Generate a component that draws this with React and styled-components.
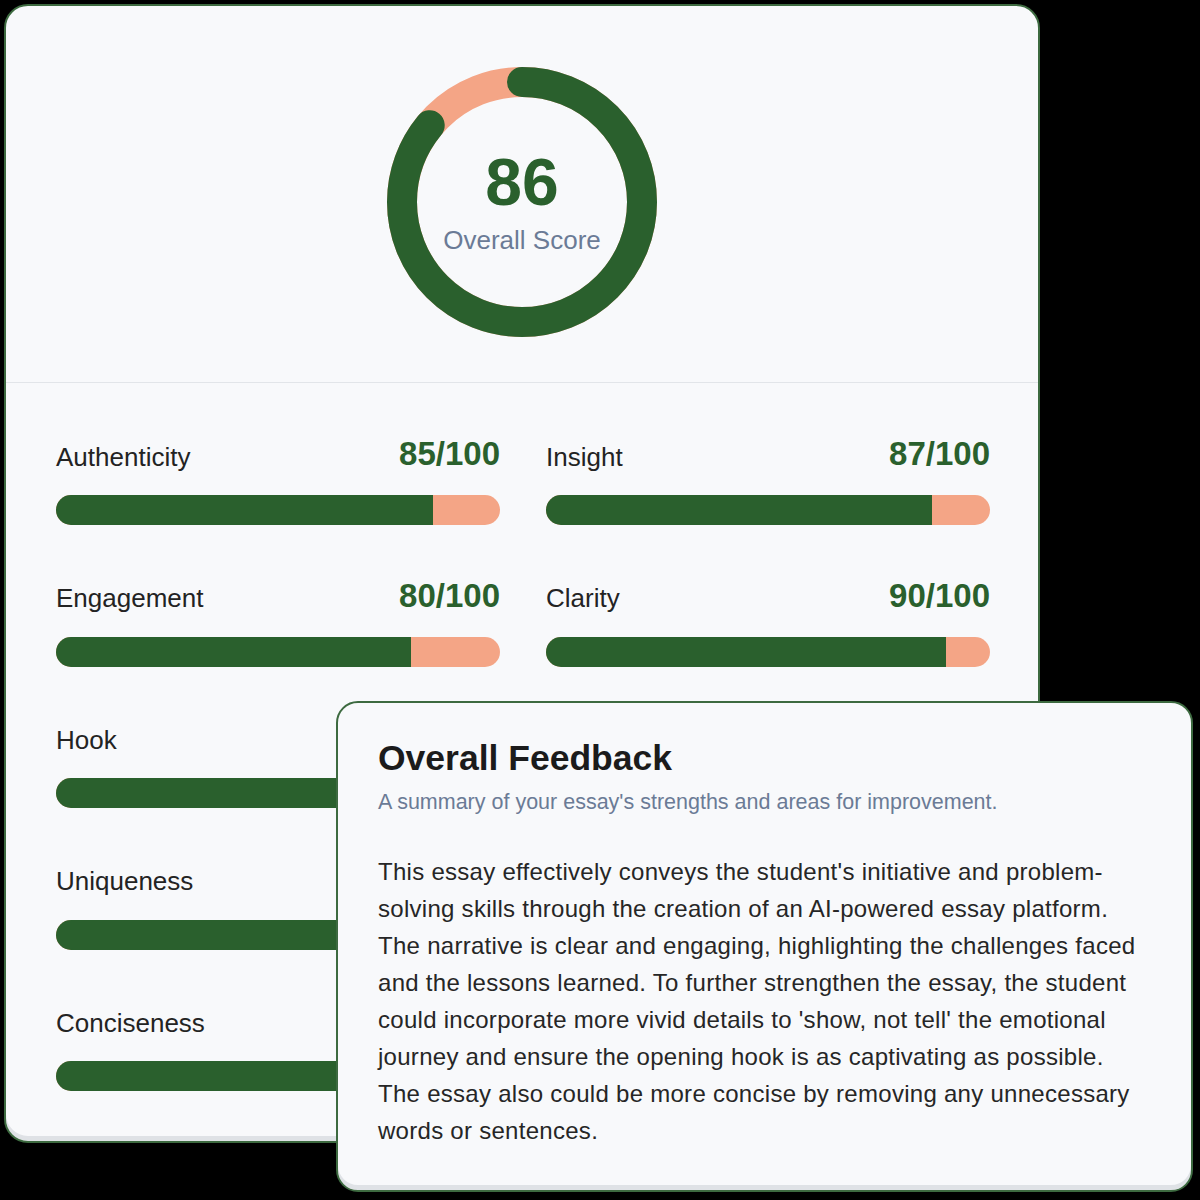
import React from 'react';
import styled, { createGlobalStyle } from 'styled-components';

const GlobalStyle = createGlobalStyle`
  html, body {
    margin: 0;
    padding: 0;
    background: #000;
  }
  * { box-sizing: border-box; }
`;

const GREEN = '#2a602d';
const PEACH = '#f4a586';

// scores behind the feedback card are not visible, so only their bars are drawn
const leftScores = [
  { name: 'Authenticity', value: 85, shown: true },
  { name: 'Engagement', value: 80, shown: true },
  { name: 'Hook', value: 84 },
  { name: 'Uniqueness', value: 86 },
  { name: 'Conciseness', value: 82 },
];

const rightScores = [
  { name: 'Insight', value: 87, shown: true },
  { name: 'Clarity', value: 90, shown: true },
];

function MetricList({ items }) {
  return (
    <Column>
      {items.map(s => (
        <Metric key={s.name}>
          <MetricHead>
            <MetricName>{s.name}</MetricName>
            {s.shown && <MetricScore>{s.value}/100</MetricScore>}
          </MetricHead>
          <Track>
            <Fill style={{ width: s.value + '%' }} />
          </Track>
        </Metric>
      ))}
    </Column>
  );
}

export default function App() {
  return (
    <>
      <GlobalStyle />
      <Page>
        <ScoreCard>
          <RingSection>
            <ScoreRing value={86} />
          </RingSection>
          <Divider />
          <MetricGrid>
            <MetricList items={leftScores} />
            <MetricList items={rightScores} />
          </MetricGrid>
        </ScoreCard>

        <FeedbackCard>
          <FeedbackTitle>Overall Feedback</FeedbackTitle>
          <FeedbackSub>A summary of your essay's strengths and areas for improvement.</FeedbackSub>
          <FeedbackBody>
            This essay effectively conveys the student's initiative and problem-solving skills through the creation of an AI-powered essay platform. The narrative is clear and engaging, highlighting the challenges faced and the lessons learned. To further strengthen the essay, the student could incorporate more vivid details to 'show, not tell' the emotional journey and ensure the opening hook is as captivating as possible. The essay also could be more concise by removing any unnecessary words or sentences.
          </FeedbackBody>
        </FeedbackCard>
      </Page>
    </>
  );
}

function ScoreRing({ value }) {
  const r = 120;
  const c = 2 * Math.PI * r;
  return (
    <RingWrap>
      <svg width="270" height="270" viewBox="0 0 270 270">
        <circle cx="135" cy="135" r={r} fill="none" stroke={PEACH} strokeWidth="30" />
        <circle
          cx="135"
          cy="135"
          r={r}
          fill="none"
          stroke={GREEN}
          strokeWidth="30"
          strokeLinecap="round"
          strokeDasharray={`${(c * value) / 100} ${c}`}
          transform="rotate(-90 135 135)"
        />
      </svg>
      <RingText>
        <BigNum>{value}</BigNum>
        <RingLabel>Overall Score</RingLabel>
      </RingText>
    </RingWrap>
  );
}

const Page = styled.div`
  position: relative;
  width: 1200px;
  height: 1200px;
  background: #000;
  padding: 4px 0 0 4px;
  font-family: "Liberation Sans", Arial, Helvetica, sans-serif;
  overflow: hidden;
`;

const ScoreCard = styled.div`
  width: 1036px;
  height: 1139px;
  background: #f8f9fb;
  border: 2px solid #3d6a40;
  border-radius: 24px;
  box-shadow: inset 0 -5px 0 #dfe2e6;
  overflow: hidden;
`;

const RingSection = styled.div`
  display: flex;
  justify-content: center;
  padding: 61px 0 44px 0;
  height: 376px;
`;

const RingWrap = styled.div`
  position: relative;
  width: 270px;
  height: 270px;
`;

const RingText = styled.div`
  position: absolute;
  inset: 0;
  display: flex;
  flex-direction: column;
  align-items: center;
  justify-content: center;
`;

const BigNum = styled.div`
  font-size: 66px;
  font-weight: 700;
  color: ${GREEN};
  line-height: 66px;
`;

const RingLabel = styled.div`
  font-size: 26px;
  line-height: 30px;
  color: #6b7b96;
  margin-top: 10px;
`;

const Divider = styled.div`
  height: 1px;
  background: #e2e5e9;
`;

const MetricGrid = styled.div`
  display: grid;
  grid-template-columns: 444px 444px;
  column-gap: 46px;
  align-items: start;
  padding: 55px 0 0 50px;
`;

const Column = styled.div`
  display: flex;
  flex-direction: column;
  gap: 54.5px;
`;

const Metric = styled.div`
  display: flex;
  flex-direction: column;
  gap: 21px;
`;

const MetricHead = styled.div`
  display: flex;
  justify-content: space-between;
  align-items: center;
  height: 36px;
`;

const MetricName = styled.span`
  font-size: 26px;
  color: #232323;
  padding-top: 2px;
`;

const MetricScore = styled.span`
  font-size: 33px;
  font-weight: 700;
  color: ${GREEN};
  margin-top: -4px;
`;

const Track = styled.div`
  height: 30px;
  border-radius: 15px;
  background: ${PEACH};
  overflow: hidden;
`;

const Fill = styled.div`
  height: 100%;
  background: ${GREEN};
`;

const FeedbackCard = styled.div`
  position: absolute;
  left: 336px;
  top: 701px;
  width: 857px;
  height: 491px;
  background: #f8f9fb;
  border: 2px solid #3d6a40;
  border-radius: 22px;
  box-shadow: inset 0 -5px 0 #dfe2e6;
  padding: 34px 40px 0 40px;
`;

const FeedbackTitle = styled.h2`
  margin: 0;
  font-size: 35.5px;
  line-height: 42px;
  font-weight: 700;
  color: #1b1b1b;
`;

const FeedbackSub = styled.p`
  margin: 10px 0 0 0;
  font-size: 21.5px;
  line-height: 26px;
  color: #6b7b96;
`;

const FeedbackBody = styled.p`
  margin: 38px 0 0 0;
  font-size: 24px;
  line-height: 37px;
  letter-spacing: 0.28px;
  color: #262626;
`;
